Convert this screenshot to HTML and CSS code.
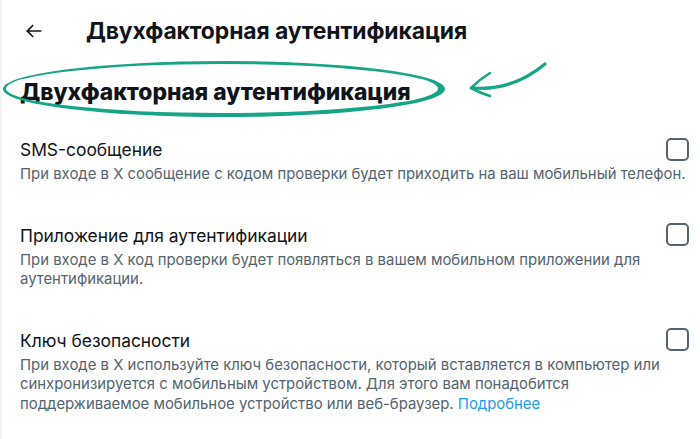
FILE: index.html
```html
<!DOCTYPE html>
<html lang="ru">
<head>
<meta charset="utf-8">
<link rel="stylesheet" href="styles.css">
</head>
<body>
<div class="page">
  <header class="topbar">
    <svg class="back" viewBox="0 0 24 24" width="20" height="20"><path d="M7.4 11h14.6v2H7.4l5.5 5.5-1.4 1.4L3.6 12l7.9-7.9 1.4 1.4z" fill="#0f1419"/></svg>
    <h1 class="topbar-title">Двухфакторная аутентификация</h1>
  </header>
  <section class="heading">
    <h2 class="heading-title">Двухфакторная аутентификация</h2>
  </section>
  <svg class="annot" width="700" height="130" viewBox="0 0 700 130">
    <path fill="#16a587" fill-rule="evenodd" d="M3,89 A221,28 0 1,0 445,89 A221,28 0 1,0 3,89 Z M6,88.5 A216,24.5 0 1,0 438,88.5 A216,24.5 0 1,0 6,88.5 Z"/>
    <g fill="none" stroke="#16a587" stroke-linecap="round">
      <path d="M473,88 C497,90 522,83 545,64" stroke-width="3.2"/>
      <path d="M471,88 Q480,79 490,73" stroke-width="2.6"/>
      <path d="M471,88 Q480,93 490,96" stroke-width="2.6"/>
    </g>
  </svg>
  <div class="options">
    <div class="option">
      <div class="option-row">
        <span class="option-title">SMS-сообщение</span>
        <span class="checkbox"></span>
      </div>
      <p class="option-desc">При входе в X сообщение с кодом проверки будет приходить на ваш мобильный телефон.</p>
    </div>
    <div class="option">
      <div class="option-row">
        <span class="option-title">Приложение для аутентификации</span>
        <span class="checkbox"></span>
      </div>
      <p class="option-desc">При входе в X код проверки будет появляться в вашем мобильном приложении для аутентификации.</p>
    </div>
    <div class="option">
      <div class="option-row">
        <span class="option-title">Ключ безопасности</span>
        <span class="checkbox"></span>
      </div>
      <p class="option-desc">При входе в X используйте ключ безопасности, который вставляется в компьютер или синхронизируется с мобильным устройством. Для этого вам понадобится поддерживаемое мобильное устройство или веб-браузер. <a class="link" href="#">Подробнее</a></p>
    </div>
  </div>
</div>
</body>
</html>
```
FILE: styles.css
```css
* { box-sizing: border-box; }
html, body { margin: 0; padding: 0; background: #fff; }
body {
  font-family: "Inter", "Noto Sans", "Liberation Sans", sans-serif;
  color: #0f1419;
}
.page {
  position: relative;
  width: 700px;
  height: 439px;
  border-left: 2px solid #f1f3f4;
  overflow: hidden;
}
.topbar {
  height: 62px;
  display: flex;
  align-items: center;
  padding-left: 21px;
}
.back { flex: none; }
.topbar-title {
  margin: 0 0 0 43px;
  font-size: 22.9px;
  font-weight: 700;
  line-height: 28px;
  letter-spacing: -0.1px;
}
.heading {
  height: 56px;
  display: flex;
  align-items: center;
  padding: 4px 0 0 18px;
}
.heading-title {
  margin: 0;
  font-size: 22.8px;
  font-weight: 800;
  line-height: 28px;
}
.annot {
  position: absolute;
  left: -2px;
  top: 0;
  pointer-events: none;
}
.options {
  padding: 20px 11px 0 18px;
  display: flex;
  flex-direction: column;
  gap: 39px;
}
.option-row {
  display: flex;
  justify-content: space-between;
  align-items: center;
  height: 24px;
}
.option-title {
  font-size: 17.4px;
  line-height: 24px;
}
.checkbox {
  width: 23px;
  height: 23px;
  border: 2.5px solid #536471;
  border-radius: 5px;
  margin-top: -2px;
}
.option-desc {
  margin: 3px -4px 0 0;
  font-size: 14.9px;
  line-height: 19.5px;
  color: #536471;
}
.link {
  color: #1d9bf0;
  text-decoration: none;
}
```
